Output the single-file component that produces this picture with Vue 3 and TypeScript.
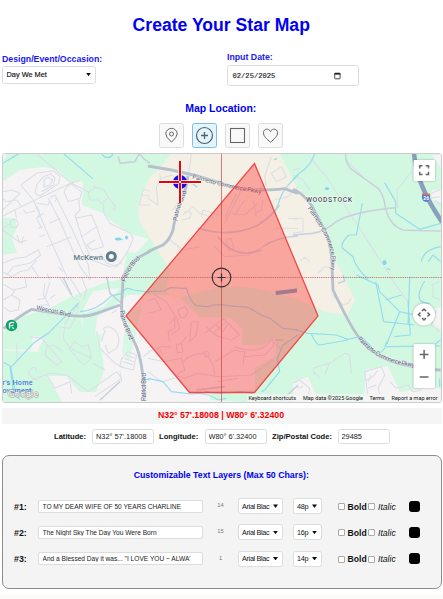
<script setup lang="ts">
import { ref } from 'vue'

interface Layer { id: number; text: string; count: string; font: string; size: string; bold: boolean; italic: boolean }
interface Tile { x: number; y: number; minor: string; mid: string; major: string; water: string }

const layers = ref<Layer[]>([
  { id: 1, text: 'TO MY DEAR WIFE OF 50 YEARS CHARLINE', count: '14', font: 'Arial Blac', size: '48p', bold: false, italic: false },
  { id: 2, text: 'The Night Sky The Day You Were Born', count: '15', font: 'Arial Blac', size: '16p', bold: false, italic: false },
  { id: 3, text: 'And a Blessed Day it was... "I LOVE YOU ~ ALWA\'', count: '1', font: 'Arial Blac', size: '14p', bold: false, italic: false },
])
const latitude = ref("N32° 57'.18008")
const longitude = ref("W80° 6'.32400")
const zip = ref('29485')
const shape = ref('plus')
const shapes = ['pin', 'plus', 'square', 'heart']

// Street data, three units per map pixel, relative to each tile's origin
const tiles: Tile[] = [
  {
    x: 0, y: 150,
    minor: 'M108 10L212 98L270 128M8 198L60 172L212 100M8 180L60 130L35 120L8 125M62 105L110 70L160 62L180 80L176 100L120 138L105 130L110 105L130 80L150 72L165 82L160 105L125 125M132 100Q130 85 145 82L158 90L150 105L132 112ZM62 105L100 150L160 290L205 390M145 145L178 210L240 350L270 390M165 135L215 235L265 345L270 390M65 170L50 150L18 155L8 145M45 182L50 205M30 225Q30 208 44 208Q56 212 54 226Q48 236 36 232ZM8 235L30 220M8 240L60 278L82 270M60 278L50 255M70 258L65 280M105 182L80 190L70 180M112 170L120 195L110 205L125 235M110 205L130 190M115 235L130 230M150 150L145 165L110 160M155 145Q150 135 165 137Q173 145 165 155M118 260L135 255M140 290L215 260M150 220L180 205M192 125Q205 95 240 92M192 125L205 155L240 145L245 125L210 100M236 145L240 180L225 195L245 260L275 330L330 350L365 340M225 205L275 195L290 230L245 260M290 230L310 290L275 300L260 285L285 270M300 310L320 340L350 350L370 325L385 300L400 265L390 250L330 220L312 190L310 165L295 150L270 150L265 128L285 112L310 118L325 142L310 158M325 142L348 172L343 182L335 172M282 105L285 114M8 340L45 325L75 322L115 300L122 315L90 340L40 350L20 375M8 365L35 380L60 365L85 360L110 330M140 370L150 390M95 350L115 380M175 350L190 365M430 118L450 122M430 118L418 165L450 165M425 135L450 138',
    mid: 'M355 20L360 40L405 35L418 10L430 25L450 40',
    major: 'M365 390Q385 345 410 325L450 304',
    water: 'M8 40L62 8M190 10L278 86M305 12Q322 34 340 12M347 265L368 269M376 261L382 263',
  },
  {
    x: 148, y: 150,
    minor: 'M0 145L30 165L25 110L40 85L75 75M35 70L40 105M130 10L125 50L108 125L75 180M110 190L135 170L155 190L200 205M105 195Q115 175 130 190L125 205L100 210M160 200L165 180L210 195M230 220L285 110L330 120L350 100M250 190L290 195L330 160M265 130L230 205M290 150L260 195M370 20L350 80L355 110M370 70L400 50L415 80L385 95L370 70M450 110L420 140L380 150M420 205L450 208M65 270L105 300L155 290M200 290L230 320L300 315L345 290M240 300L235 270L250 265L257 295L240 302M380 235L450 235M320 190L340 180L345 150M325 200L315 150',
    mid: 'M150 235Q250 265 330 225Q370 200 395 165M345 290Q390 260 450 258M210 260Q260 330 340 300',
    major: 'M0 48L70 60L150 78L280 118Q370 122 410 116L450 130M120 78Q115 120 95 165Q80 205 75 240Q65 270 45 285L0 305',
    water: 'M378 29L388 26M130 98L148 112M450 75L425 100Q400 125 390 165L378 190',
  },
  {
    x: 293, y: 150,
    minor: 'M45 15L100 80L290 375M0 75L30 90L50 120M315 175L312 120L355 65M30 205V245L0 250M0 205L30 205M20 335L35 322L50 335M75 370L95 350L118 352M415 130L440 120M410 145L440 140M425 150L445 165M0 60L20 55M158 30L210 80',
    mid: 'M158 10Q155 45 185 65L255 115Q270 130 275 160Q285 225 330 240Q390 243 443 243M0 255L60 250Q95 245 130 215Q180 185 310 173',
    major: 'M0 118Q25 125 55 165L95 240Q120 290 118 390',
    water: 'M0 87L25 65Q55 45 65 10M97 115L106 119M208 160L190 255L168 255Q145 275 147 293L180 320Q185 350 225 388M275 98L308 155V190L380 238L443 220M385 335Q390 300 443 290M405 335L420 315L443 335M270 338L280 340M283 355L292 361',
  },
  {
    x: 0, y: 275,
    minor: 'M10 28L40 45L80 35L75 10M10 75L35 60L60 75L55 105L30 110L10 95M35 60L45 45M135 25L130 60L150 95M110 75L135 70L150 20M120 90L145 90M150 70L165 60M180 8L220 70L235 75M210 8L245 65M245 8L260 45L250 75M240 80L195 145L190 190L210 220L275 250M235 90L230 120L210 160L175 155M90 185L125 190L185 260L170 270L135 240L140 215L160 210L190 230M125 190L150 175M205 225L225 200L245 215L265 210L275 250L250 270L210 225M95 315L150 295L200 300L265 350L350 290L365 310L285 365M140 300L165 340L210 320L215 355M290 170L300 220L345 265L375 280M310 165Q315 145 345 165Q365 190 350 220L325 235L315 210M315 165L305 200M335 115L350 105M385 230L410 240L400 285L360 275L365 250ZM378 240L405 250M372 250L402 260M370 260L400 270M360 290L365 320M430 245L450 230M45 145L55 170M420 320L450 310M50 205L52 260M85 290Q105 265 110 290M85 290Q90 310 115 315M280 265L315 285',
    mid: 'M360 320L300 375M190 8L215 60M320 5L330 55L365 85',
    major: 'M25 150Q65 120 95 103L190 118Q250 130 290 115L360 90M370 0L365 85L365 125L405 205Q430 255 433 378M10 160L30 150',
    water: 'M10 262L35 275L100 205L150 170L235 85M240 110Q290 108 335 62L368 55Q375 32 400 45L450 52M32 275L45 345M435 312L450 315M30 275L40 350L60 375',
  },
  {
    x: 148, y: 275,
    minor: 'M20 35L20 60L55 80L80 120L80 160L60 170L65 200M0 78L20 70L40 105L0 115M65 145L85 125L95 160L70 180M90 105L110 95L120 110L110 130L95 125ZM130 140L150 140L145 180L125 200ZM85 210L100 205L105 230L88 235ZM100 205L115 185M30 215L45 240M0 230L40 215L70 215M0 250L50 260L100 250L110 285L85 300L60 280M105 260Q130 235 170 235Q200 260 200 305M175 155L200 180L250 195L275 180M170 175L225 130L275 180M200 170L235 140M185 165L210 185M205 150L225 170L240 145M165 235Q175 220 185 238Q175 255 167 240M80 300L110 310L150 295L215 305L310 300L375 255M200 260L260 225L290 230L285 270M260 215Q330 240 360 205Q380 180 375 215L350 240L290 245M375 200L400 225M0 290L40 320L80 310M210 320L270 310',
    mid: 'M400 378L450 330M145 345L230 335M380 195L405 195',
    major: 'M0 0',
    water: 'M0 50L50 48L65 38L115 40Q130 85 145 92L180 95Q205 85 240 92L300 97L340 120L365 130L405 160L450 165M450 180L405 210L388 250L395 290L350 345L340 350M0 310L45 320L70 350L130 357Q175 350 210 375L235 370M170 350L215 355L280 350L315 355',
  },
  {
    x: 293, y: 275,
    minor: 'M0 45L15 42M118 60L150 90L165 85L175 70M290 5L345 80M415 30L440 20M420 30V65L443 75M60 280L110 265L155 235L170 240L175 295M80 305L60 290M60 280L65 300M110 265L95 300M215 290L265 275L275 300L255 340L265 370M220 315L240 305L255 285M225 340L250 330M215 290L225 365M0 325L20 315L50 340L45 370M0 340L30 335M290 320L310 340L345 330L360 350L385 345M430 105L415 150L440 170M235 300L225 320',
    mid: 'M150 0L155 18L135 25',
    major: 'M118 0L120 45Q175 160 200 190Q245 255 360 275Q400 285 443 285',
    water: 'M0 162L45 175L130 180L165 193L200 185L235 222M55 178Q70 210 80 210L165 195M190 0L255 30L260 50L320 110L280 210M248 20L272 140L365 150M278 75L325 60M350 5L345 150M345 80L352 180L305 185M370 120Q340 115 320 110M280 215L443 213M280 200L275 220L260 235M395 18Q355 85 410 85M415 215L443 195M210 190L235 215M440 310V335',
  },
]
</script>

<template>
  <main class="page">
    <h1>Create Your Star Map</h1>

    <section class="top">
      <div class="field design">
        <label>Design/Event/Occasion:</label>
        <div class="select occasion"><span>Day We Met</span><i class="caret"></i></div>
      </div>
      <div class="field date">
        <label>Input Date:</label>
        <div class="date-box">
          <span>02/25/2025</span>
          <svg width="7" height="8" viewBox="0 0 7 8"><rect x=".7" y="1.2" width="5.4" height="5.6" rx=".7" fill="none" stroke="#333" stroke-width=".9" /><path d="M.5 1.8H6.3" stroke="#222" stroke-width="1.6" /></svg>
        </div>
      </div>
    </section>

    <h2 class="map-heading">Map Location:</h2>
    <div class="shapes">
      <button v-for="s in shapes" :key="s" :class="{ active: shape === s }" :aria-label="s" @click="shape = s">
        <svg width="19" height="19" viewBox="0 0 19 19" fill="none" stroke="#666" stroke-width="1">
          <g v-if="s === 'pin'"><path d="M9.500 16.200Q3.800 11 3.800 7.800A5.700 5.400 0 0 1 15.200 7.800Q15.200 11 9.500 16.200Z" /><circle cx="9.5" cy="8" r="2" /></g>
          <g v-else-if="s === 'plus'" stroke="#4d6470"><circle cx="9.5" cy="9.5" r="8" stroke-width="1.2" /><path d="M9.500 6V13M6 9.500H13" stroke-width="1.3" /></g>
          <rect v-else-if="s === 'square'" x="2.5" y="2.5" width="14" height="14" stroke-width="1.1" />
          <path v-else d="M9.500 16.300C6 13 2.500 10.600 2.500 6.800C2.500 2.500 7.800 1.800 9.500 5.700C11.200 1.800 16.500 2.500 16.500 6.800C16.500 10.600 13 13 9.500 16.300Z" />
        </svg>
      </button>
    </div>

    <div class="map">
      <svg width="438" height="248" viewBox="3 154 438 248">
        <defs>
          <path id="r-patriot-n" d="M177.500 221Q178 211 182.500 202T186.500 190" />
          <path id="r-palmetto-n" d="M192 178.500L231 188.500L263 194" />
          <path id="r-palmetto-e" d="M307.500 208Q321 228 327 241T330.500 272" />
          <path id="r-patriot-m" d="M125.500 282Q129 269 141 258" />
          <path id="r-westcott" d="M36 309.500L53 313L71 317" />
          <path id="r-patriot-s" d="M120 311Q122 324 130 341" />
          <path id="r-patriot-b" d="M146.300 401V372" />
          <path id="r-palmetto-s" d="M357.500 339Q373 356 388 361T417 367" />
        </defs>

        <rect x="2" y="153" width="440" height="250" fill="#f5f3f4" />
        <g fill="#d3f8e2">
          <path d="M7 153H442V388H425L400 392L388 366L366 370L364 402H293L245 402L210 400V392L255 390V368L276 356L276 338L262 345L242 345L243 330L231 318L199 317L178 295H128L103 315H80L85 337L95 352L104 371L96 392H80L66 376H42L38 350L45 337L33 336L31 350L2 349V333L22 317L50 308L80 292L106 282L122 279L127 252L136 253L149 239L131 234L110 220L103 213L82 205L83 183L80 180L71 183L58 170L43 167L20 170L2 182V164Z" />
          <path d="M2 218H15L17 228L12 238L17 253L2 255ZM2 350L38 352L47 375L62 402H2Z" />
        </g>
        <path d="M2 280H84L83 292L45 307L22 315L2 300Z" fill="#f5f3f4" />
        <path d="M172 153H279L293 180L307 201L323 227L330 250L344 277L355 300L347 315L325 312Q300 298 265 290Q230 282 200 292L174 299L166 291L170 270L148 235Q133 218 141 195L150 177Q160 169 172 153Z" fill="#f5f0e5" />
        <path d="M293 382L308 377L319 402H293ZM442 306L432 310L434 325L442 330ZM432 155H442V169L436 161ZM432 190H442V203L432 200Z" fill="#f5f3f4" />
        <path d="M90 336L108 333L125 313L142 305L126 378L110 374L88 352Z" fill="#d3f8e2" opacity=".8" />
        <path d="M93 291L120 288L126 318L122 352L142 375L140 402H98L105 371L97 350L102 338L104 318L82 312Z" fill="#f5f3f4" />
        <path d="M82 314L104 307L124 283L128 283L122 300L97 317L95 335L102 352L104 368L90 384L84 377L92 360L84 340Z" fill="#d3f8e2" />

        <g v-for="t in tiles" :key="`${t.x}-${t.y}`" :transform="`translate(${t.x} ${t.y}) scale(.33333)`" fill="none" stroke-linejoin="round">
          <path :d="t.minor" stroke="#dadfe6" stroke-width="3.2" />
          <path :d="t.mid" stroke="#c9d2dc" stroke-width="4.8" />
          <path :d="t.water" stroke="#96dcee" stroke-width="3.6" />
          <path :d="t.major" stroke="#b7c1cd" stroke-width="8.5" />
        </g>
        <path d="M414 153Q416 184 442 222" stroke="#899fbd" stroke-width="4.600" fill="none" />
        <g fill="#83d5ee"><ellipse cx="384.500" cy="262.500" rx="2" ry="2.500" /><ellipse cx="126.500" cy="237.500" rx="1.500" ry="2" /><ellipse cx="118" cy="239" rx="3" ry="1.500" /><ellipse cx="327" cy="188.500" rx="2" ry="1.500" /></g>

        <g class="road-name">
          <text><textPath href="#r-patriot-n" textLength="31">Patriot Blvd</textPath></text>
          <text><textPath href="#r-palmetto-n" textLength="71">Palmetto Commerce Pkwy</textPath></text>
          <text><textPath href="#r-palmetto-e" textLength="68">Palmetto Commerce Pkwy</textPath></text>
          <text><textPath href="#r-patriot-m" textLength="28">Patriot Blvd</textPath></text>
          <text><textPath href="#r-westcott" textLength="35">Wescott Blvd</textPath></text>
          <text><textPath href="#r-patriot-s" textLength="31">Patriot Blvd</textPath></text>
          <text><textPath href="#r-patriot-b" textLength="28">Patriot Blvd</textPath></text>
          <text><textPath href="#r-palmetto-s" textLength="65">Palmetto Commerce Pkwy</textPath></text>
        </g>
        <text class="woodstock" x="306" y="202" textLength="46">WOODSTOCK</text>
        <text class="place" x="73.500" y="260" textLength="29.500">McKewn</text>
        <circle cx="111.300" cy="256.500" r="4" fill="#f7fafa" stroke="#607d8b" stroke-width="3" />
        <circle cx="11.500" cy="325.500" r="5.800" fill="#0fa36b" />
        <path d="M9.500 328.500V323.500Q12 321.500 14 323M10.500 326L13.500 325M12 327.500L14 328.500" stroke="#fff" stroke-width="1.300" fill="none" />
        <g class="shop"><text x="2.500" y="384.500" textLength="30">r's Home</text><text x="2.500" y="392.500" textLength="29">ovement</text></g>
        <text class="google" x="7.500" y="397" textLength="31">Google</text>

        <path d="M422 194H430Q431 201 426 202Q421 201 422 194Z" fill="#4c7fc9" /><path d="M422 194.300H430" stroke="#e16a67" stroke-width="1.800" />
        <text class="shield" x="423.300" y="200">26</text>

        <path d="M254.500 163.500L318 316L254.500 392.500H189.500L126 316Z" fill="rgba(255,55,55,.4)" stroke="#f14949" stroke-width="1.300" />
        <path d="M275.500 291L297 288.500V292.500L276 295Z" fill="#a27b8d" />
        <path d="M221.500 153V402" stroke="#c93a3a" stroke-opacity=".65" stroke-width="1" />
        <path d="M2 277.500H442" stroke="#b75454" stroke-opacity=".65" stroke-width="1" stroke-dasharray="1.500 .7" />
        <circle cx="221.500" cy="277.500" r="9.300" fill="none" stroke="#333" stroke-width="1.200" /><path d="M217.500 277.500H225.500M221.500 273.500V281.500" stroke="#333" stroke-width="1.200" />

        <circle cx="180" cy="182" r="7" fill="#1212e8" />
        <path d="M159 182H201M180 161V203" stroke="#fff" stroke-width="3.600" /><path d="M159 182H179M181 182H201M180 161V181M180 183V203" stroke="#f20000" stroke-width="2" />

        <g class="controls"><rect x="413.500" y="160" width="21.500" height="21" rx="1" /><circle cx="424" cy="314.500" r="11" /><rect x="413.500" y="344" width="21.500" height="44" rx="1.500" /></g>
        <g fill="none" stroke="#666" stroke-width="1.500">
          <path d="M419.700 168.500V165.700H422.500M425.700 165.700H428.500V168.500M428.500 171.700V174.500H425.700M422.500 174.500H419.700V171.700" />
          <path d="M422 311L424 309L426 311M422 318L424 320L426 318M420.500 312.500L418.500 314.500L420.500 316.500M427.500 312.500L429.500 314.500L427.500 316.500" />
          <path d="M419.700 354.500H428.500M424.100 350V359M419.700 377H428.500" />
        </g>
        <rect x="247" y="394" width="195" height="8" fill="#f5f5f5" opacity=".7" />
        <g class="credits"><text x="248.500" y="399.700" textLength="47.500">Keyboard shortcuts</text><text x="303" y="399.700" textLength="60">Map data ©2025 Google</text><text x="369.500" y="399.700" textLength="15">Terms</text><text x="391.500" y="399.700" textLength="46">Report a map error</text></g>
      </svg>
    </div>

    <p class="coords">N32° 57'.18008 | W80° 6'.32400</p>
    <section class="location">
      <label class="lat">Latitude:</label><input v-model="latitude">
      <label class="lon">Longitude:</label><input v-model="longitude">
      <label class="zip">Zip/Postal Code:</label><input v-model="zip" class="zip-input">
    </section>

    <section class="panel">
      <h2>Customizable Text Layers (Max 50 Chars):</h2>
      <div v-for="l in layers" :key="l.id" class="row">
        <b class="num">#{{ l.id }}:</b>
        <input v-model="l.text">
        <span class="count">{{ l.count }}</span>
        <div class="select font"><span>{{ l.font }}</span><i class="caret"></i></div>
        <div class="select size"><span>{{ l.size }}</span><i class="caret"></i></div>
        <label class="check bold"><input v-model="l.bold" type="checkbox">Bold</label>
        <label class="check italic"><input v-model="l.italic" type="checkbox">Italic</label>
        <span class="swatch"></span>
      </div>
    </section>
    <footer></footer>
  </main>
</template>

<style>
body { background: #fff; overflow: hidden; }
</style>

<style scoped>
* { box-sizing: border-box; }
.page { width: 443px; height: 599px; padding: 0 1.5px 0 2px; display: flex; flex-direction: column; font-family: "Liberation Sans", Arial, sans-serif; color: #111; overflow: hidden; }
h1 { margin: 13.5px 1px 0 0; height: 22px; line-height: 22px; font-size: 17.6px; color: #0000f5; text-align: center; }
h2 { margin: 0; color: #0000f5; text-align: center; white-space: nowrap; }
.top { height: 66.5px; padding-top: 15.5px; display: flex; }
.field { display: flex; flex-direction: column; }
.field label { height: 12px; line-height: 12px; font-size: 8.75px; font-weight: bold; color: #1a1af0; white-space: nowrap; }
.design { width: 225px; padding-top: 1.5px; }
.select { display: flex; align-items: center; border: 1px solid #ddd; border-radius: 2.5px; background: #fff; }
.select span { flex: 1; overflow: hidden; white-space: nowrap; font-size: 7.2px; }
.caret { flex: none; width: 5px; height: 3.5px; background: #111; clip-path: polygon(0 0, 100% 0, 50% 100%); }
.occasion { width: 94px; height: 18px; margin-top: 1px; padding: 0 4px 0 3.5px; }
.occasion span { font-size: 7.36px; -webkit-text-stroke: .15px #111; }
.date-box { display: flex; align-items: center; justify-content: space-between; width: 132px; height: 21px; margin-top: 2px; padding: 0 17px 0 4.5px; border: 1px solid #ddd; border-radius: 2.5px; font: 7.15px "Liberation Mono", monospace; -webkit-text-stroke: .1px #111; }
.map-heading { height: 12px; line-height: 12px; margin-right: 2px; font-size: 10.5px; }
.shapes { display: flex; justify-content: center; gap: 8px; margin: 9px 1px 0 0; }
.shapes button { display: grid; place-items: center; width: 25px; height: 25px; padding: 0; border: 1px solid #ddd; border-radius: 2.5px; background: #f9f9f9; }
.shapes button.active { background: #e4f5fd; border-color: #7dbdf0; }
.map { flex: none; width: 440px; height: 250px; margin-top: 5px; border: 1px solid #ccc; border-radius: 3px; overflow: hidden; }
.map svg { display: block; }
.road-name { font: 6.3px Roboto, sans-serif; fill: #596579; stroke: #fff; stroke-width: 1px; stroke-opacity: .6; paint-order: stroke; }
.woodstock { font: 500 6.8px Roboto, sans-serif; fill: #45505a; stroke: #fff; stroke-width: 1px; paint-order: stroke; }
.place { font: 500 7.5px Roboto, sans-serif; fill: #607d8b; }
.shop { font: 500 7.2px Roboto, sans-serif; fill: #4579db; }
.google { font: 9.5px "Open Sans", sans-serif; fill: #fff; stroke: #999; stroke-width: 1px; paint-order: stroke; }
.shield { font: bold 5px Roboto, sans-serif; fill: #fff; }
.controls { fill: #fff; filter: drop-shadow(0 .5px 1px rgba(0, 0, 0, .3)); }
.credits { font: 5.5px Roboto, sans-serif; fill: #111; }
.coords { flex: none; margin: 5px 0 0; padding-right: 1.5px; height: 16px; line-height: 15px; border-radius: 2px; background: #f5f5f5; color: #f50000; font-size: 8.8px; font-weight: bold; text-align: center; }
.location { display: flex; align-items: center; height: 15px; margin: 5px 0 0 52px; font-size: 7.6px; font-weight: bold; white-space: nowrap; }
.location input { width: 62px; height: 15px; padding: 0 3px; border: 1px solid #ddd; border-radius: 2.5px; font: 7.35px "Liberation Sans", sans-serif; color: #222; }
.lat { width: 38px; }
.lon { width: 50.5px; padding-left: 5px; }
.zip { width: 71px; padding-left: 5.5px; }
.location .zip-input { width: 52px; }
.panel { flex: none; height: 134.5px; margin-top: 11px; padding-top: 13px; border: 1.5px solid #8d8d8d; border-radius: 7px; background: #f4f4f4; }
.panel h2 { height: 12px; line-height: 12px; margin: 0 1px 12.5px 0; font-size: 8.78px; }
.row { display: flex; align-items: center; height: 26.3px; padding-left: 11px; }
.num { width: 24px; padding-top: 1px; font-size: 8.8px; }
.row > input { width: 165px; height: 13px; padding: 0 3.5px; border: 1px solid #ddd; border-radius: 2px; background: #fff; font: 6.6px "Liberation Sans", sans-serif; color: #222; }
.count { width: 35px; padding-bottom: 2px; font-size: 5.8px; color: #777; text-align: center; }
.font { width: 45px; height: 16px; padding: 0 4px 0 3px; }
.size { width: 29px; height: 16px; margin-left: 10px; padding: 0 4px 0 3px; }
.row .select .caret { margin-left: 1px; }
.row .select span { letter-spacing: -.3px; }
.check { display: flex; align-items: center; gap: 3px; width: 30.5px; margin-left: 15.5px; padding-top: 1px; font-size: 8.65px; }
.bold { font-weight: bold; }
.italic { margin-left: 0; width: 41px; font-style: italic; }
.check input { appearance: none; flex: none; width: 7px; height: 7px; margin: 0; border: 1px solid #aaa; border-radius: 1px; background: #fff; }
.swatch { width: 10.5px; height: 11px; border-radius: 3px; background: #000; }
footer { flex: none; height: 4px; margin: 6px -1.5px 0 -2px; background: #fdf9f6; }
</style>
